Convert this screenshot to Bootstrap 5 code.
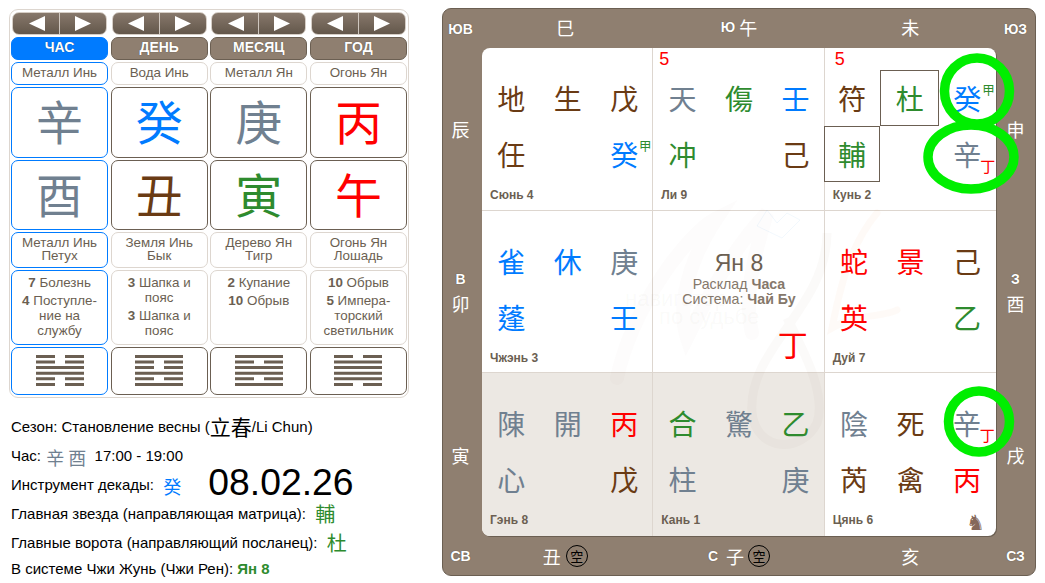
<!DOCTYPE html>
<html lang="ru">
<head>
<meta charset="utf-8">
<title>Ци Мэнь</title>
<link rel="stylesheet" href="https://cdn.jsdelivr.net/npm/bootstrap@5.3.0/dist/css/bootstrap.min.css">
<style>
:root{--brown:#8f7f70;--dk:#6b5f52;--ln:#ddd6cf;}
html,body{background:#fff;overflow:hidden}
body{width:1045px;height:583px;font-family:"Liberation Sans","Noto Sans CJK TC",sans-serif;font-size:14px;color:#000}
.han{font-family:"Noto Sans CJK TC","Noto Sans CJK SC",sans-serif}
.e-m{color:#708090}.e-w{color:#007bff}.e-f{color:#f00}.e-e{color:#6a3b14}.e-t{color:#2e8b2e}
.page{padding:9px 0 0 9px;gap:33px;align-items:flex-start}
.left-col{width:400px;flex:none}
.pan{height:389px;border:1px solid var(--ln);border-radius:9px;padding:2px 1px 1px 1px;display:grid;grid-template-columns:repeat(4,1fr);grid-template-rows:23px 23px 23px 71px 70px 36px 75px 48px;gap:2px 2.5px}
.navb{margin:0 1px;border:1px solid #d6cec6;border-radius:7px;overflow:hidden;background:linear-gradient(#87786b,#63574b)}
.navb .btn{padding:0;border:0;border-radius:0;flex:1 1 50%;height:100%;display:flex;align-items:center;justify-content:center;background:transparent}
.navb .btn+.btn{border-left:1px solid #cfc7bf}
.tabx{background:var(--brown);border:1px solid var(--dk);border-radius:7px;color:#fff;font-weight:700;font-size:14px;padding-bottom:3px;text-shadow:0 0 1px rgba(0,0,0,.5)}
.tabx.on{background:#007bff;border-color:#007bff}
.cellx{border:1px solid var(--ln);border-radius:7px;color:var(--dk);font-size:13.4px;line-height:13.4px;text-align:center;padding-bottom:2px}
.cellx.dk{border-color:var(--dk)}
.pan .on{border-color:#007bff}
.big{font-size:47px;line-height:1;padding-bottom:4px}
.phs{line-height:15px;padding-top:4px;padding-bottom:0}
.phs div+div{margin-top:3px}
.info{padding:15px 0 0 2px;font-size:15px}
.inf-l{height:29px}
.inf-last{height:22px}
.inf-l .hz{font-size:18px;line-height:1}
.inf-l .hzn{margin-left:1px}
.inf-l .hzl{font-size:20px;line-height:1;margin-left:1px;padding-bottom:2px}
.inf-l .sea{font-size:21px;line-height:1;padding-bottom:3px}
.dt{font-size:37.3px;line-height:1;margin-left:27px;padding-bottom:5px}
.board{width:594px;height:568px;margin-top:-1px;background:var(--brown);border:1px solid var(--dk);border-radius:9px;display:grid;grid-template-columns:39px repeat(3,1fr) 39px;grid-template-rows:39px repeat(3,1fr) 39px;color:#fff;position:relative}
.edge{font-size:18px;line-height:1}
.edge b{font-size:14px;font-family:"Liberation Sans",sans-serif;text-shadow:0 0 1px rgba(0,0,0,.5)}
.edge.top{padding-bottom:4px}
.edge.top b{margin-top:1px}
.edge.lft{padding-right:4px}
.kong{width:22px;height:22px;border:1px solid #000;border-radius:50%;color:#000;font-size:13px;line-height:20px;text-align:center;margin-left:5px}
.shl{padding-right:5px}
.inner{grid-column:2/5;grid-row:2/5;display:grid;grid-template-columns:repeat(3,1fr);grid-template-rows:repeat(3,1fr);background:#fff;border-radius:8px;overflow:hidden;color:var(--dk);box-shadow:1px 1px 0 #6b5f52;position:relative}
.pal{border-right:1px solid var(--ln);border-bottom:1px solid var(--ln);padding-left:1px;min-width:0}
.pal:nth-child(3n){border-right:0}.pal:nth-child(n+7){border-bottom:0}
.pal.gy{background:#ece8e3}
.ptop{height:22px;font-family:"Liberation Sans",sans-serif;font-size:18px;line-height:22px;color:#f00;padding-left:5px}
.ptop.k{padding-left:9px}
.gly{display:grid;grid-template-columns:repeat(3,56.5px);grid-template-rows:repeat(2,56px);font-size:28px}
.gly.kn-g{margin-left:-2px;grid-template-columns:56.5px 59px 56px}
.gly>span{display:flex;align-items:center;justify-content:center;position:relative;line-height:1}
.boxed{outline:1px solid var(--dk);outline-offset:-1px}
.sup,.sub{position:absolute;line-height:1}
.sup{left:43px;top:14px;font-size:12.5px}
.sub{left:41px;top:32px;font-size:15px}
.lbl{font-size:12px;font-weight:700;font-family:"Liberation Sans",sans-serif;padding:6px 7px 0;line-height:14px;color:var(--dk)}
.kn{font-family:"DejaVu Sans",sans-serif;font-size:21px;line-height:14px;font-weight:400;color:#85685a;margin:3px 4px 0 0}
.ctr{padding-top:39px;color:#85786b;font-family:"Liberation Sans","Noto Sans CJK TC",sans-serif}
.ctr .t1{font-size:23px;line-height:26px;color:var(--dk)}
.ctr .t2{font-size:14.2px;line-height:15.5px}
.ctr .t1+.t2{margin-top:1px}
.ctr .dng{font-family:"Noto Sans CJK TC",sans-serif;font-size:30px;line-height:1;margin:20px 16px 0 auto}
.wm,.rings{position:absolute;pointer-events:none}
.wm{left:0;top:0}
.wm text{font-size:22px;font-family:"Liberation Sans",sans-serif;fill:#8f7f70;fill-opacity:.05}
.rings{left:-1px;top:-1px}
</style>
</head>
<body>
<div class="page d-flex">
  <div class="left-col">
    <div class="pan">
      <div class="navb btn-group d-flex"><button class="btn" type="button"><svg width="16" height="15"><polygon points="16,0 16,15 0,7.5" fill="#fff"/></svg></button><button class="btn" type="button"><svg width="16" height="15"><polygon points="0,0 0,15 16,7.5" fill="#fff"/></svg></button></div>
      <div class="navb btn-group d-flex"><button class="btn" type="button"><svg width="16" height="15"><polygon points="16,0 16,15 0,7.5" fill="#fff"/></svg></button><button class="btn" type="button"><svg width="16" height="15"><polygon points="0,0 0,15 16,7.5" fill="#fff"/></svg></button></div>
      <div class="navb btn-group d-flex"><button class="btn" type="button"><svg width="16" height="15"><polygon points="16,0 16,15 0,7.5" fill="#fff"/></svg></button><button class="btn" type="button"><svg width="16" height="15"><polygon points="0,0 0,15 16,7.5" fill="#fff"/></svg></button></div>
      <div class="navb btn-group d-flex"><button class="btn" type="button"><svg width="16" height="15"><polygon points="16,0 16,15 0,7.5" fill="#fff"/></svg></button><button class="btn" type="button"><svg width="16" height="15"><polygon points="0,0 0,15 16,7.5" fill="#fff"/></svg></button></div>

      <div class="tabx on d-flex align-items-center justify-content-center">ЧАС</div>
      <div class="tabx d-flex align-items-center justify-content-center">ДЕНЬ</div>
      <div class="tabx d-flex align-items-center justify-content-center">МЕСЯЦ</div>
      <div class="tabx d-flex align-items-center justify-content-center">ГОД</div>

      <div class="cellx on d-flex align-items-center justify-content-center">Металл Инь</div>
      <div class="cellx d-flex align-items-center justify-content-center">Вода Инь</div>
      <div class="cellx d-flex align-items-center justify-content-center">Металл Ян</div>
      <div class="cellx d-flex align-items-center justify-content-center">Огонь Ян</div>

      <div class="cellx dk on d-flex align-items-center justify-content-center"><span class="big han e-m">辛</span></div>
      <div class="cellx dk d-flex align-items-center justify-content-center"><span class="big han e-w">癸</span></div>
      <div class="cellx dk d-flex align-items-center justify-content-center"><span class="big han e-m">庚</span></div>
      <div class="cellx dk d-flex align-items-center justify-content-center"><span class="big han e-f">丙</span></div>

      <div class="cellx dk on d-flex align-items-center justify-content-center"><span class="big han e-m">酉</span></div>
      <div class="cellx dk d-flex align-items-center justify-content-center"><span class="big han e-e">丑</span></div>
      <div class="cellx dk d-flex align-items-center justify-content-center"><span class="big han e-t">寅</span></div>
      <div class="cellx dk d-flex align-items-center justify-content-center"><span class="big han e-f">午</span></div>

      <div class="cellx on d-flex align-items-center justify-content-center">Металл Инь<br>Петух</div>
      <div class="cellx d-flex align-items-center justify-content-center">Земля Инь<br>Бык</div>
      <div class="cellx d-flex align-items-center justify-content-center">Дерево Ян<br>Тигр</div>
      <div class="cellx d-flex align-items-center justify-content-center">Огонь Ян<br>Лошадь</div>

      <div class="cellx on phs"><div><b>7</b> Болезнь</div><div><b>4</b> Поступле-<br>ние на<br>службу</div></div>
      <div class="cellx phs"><div><b>3</b> Шапка и<br>пояс</div><div><b>3</b> Шапка и<br>пояс</div></div>
      <div class="cellx phs"><div><b>2</b> Купание</div><div><b>10</b> Обрыв</div></div>
      <div class="cellx phs"><div><b>10</b> Обрыв</div><div><b>5</b> Импера-<br>торский<br>светильник</div></div>

      <div class="cellx dk on d-flex align-items-center justify-content-center"><svg width="48" height="31" stroke="#6b5f52" stroke-width="3" fill="none"><path d="M0 1.5H19M29 1.5H48M0 7H19M29 7H48M0 12.6H48M0 18.2H48M0 23.8H19M29 23.8H48M0 29.4H19M29 29.4H48"/></svg></div>
      <div class="cellx dk d-flex align-items-center justify-content-center"><svg width="48" height="31" stroke="#6b5f52" stroke-width="3" fill="none"><path d="M0 1.5H48M0 7H19M29 7H48M0 12.6H19M29 12.6H48M0 18.2H48M0 23.8H19M29 23.8H48M0 29.4H48"/></svg></div>
      <div class="cellx dk d-flex align-items-center justify-content-center"><svg width="48" height="31" stroke="#6b5f52" stroke-width="3" fill="none"><path d="M0 1.5H48M0 7H19M29 7H48M0 12.6H48M0 18.2H48M0 23.8H19M29 23.8H48M0 29.4H48"/></svg></div>
      <div class="cellx dk d-flex align-items-center justify-content-center"><svg width="48" height="31" stroke="#6b5f52" stroke-width="3" fill="none"><path d="M0 1.5H19M29 1.5H48M0 7H48M0 12.6H48M0 18.2H48M0 23.8H48M0 29.4H19M29 29.4H48"/></svg></div>
    </div>
    <div class="info">
      <div class="inf-l d-flex align-items-center">Сезон: Становление весны (<span class="sea han">立春</span>/Li Chun)</div>
      <div class="inf-l d-flex align-items-center">Час:&nbsp;<span class="hz hzn han e-m">辛 酉</span>&nbsp;&nbsp;17:00 - 19:00</div>
      <div class="inf-l d-flex align-items-center">Инструмент декады:&nbsp;&nbsp;<span class="hz hzn han e-w">癸</span><span class="dt">08.02.26</span></div>
      <div class="inf-l d-flex align-items-center">Главная звезда (направляющая матрица):&nbsp;&nbsp;<span class="hzl han e-t">輔</span></div>
      <div class="inf-l d-flex align-items-center">Главные ворота (направляющий посланец):&nbsp;&nbsp;<span class="hzl han e-t">杜</span></div>
      <div class="inf-l inf-last d-flex align-items-center">В системе Чжи Жунь (Чжи Рен):&nbsp;<b class="e-t">Ян 8</b></div>
    </div>
  </div>

  <div class="board">
    <div class="edge d-flex align-items-center justify-content-center pe-1"><b>ЮВ</b></div>
    <div class="edge top shl d-flex align-items-center justify-content-center han">巳</div>
    <div class="edge top d-flex align-items-center justify-content-center han"><b class="me-1">Ю</b>午</div>
    <div class="edge top d-flex align-items-center justify-content-center han">未</div>
    <div class="edge d-flex align-items-center justify-content-center"><b>ЮЗ</b></div>

    <div class="edge lft d-flex align-items-center justify-content-center han" style="grid-column:1;grid-row:2">辰</div>
    <div class="edge lft d-flex flex-column gap-2 align-items-center justify-content-center han" style="grid-column:1;grid-row:3"><b>В</b>卯</div>
    <div class="edge lft d-flex align-items-center justify-content-center han" style="grid-column:1;grid-row:4">寅</div>
    <div class="edge d-flex align-items-center justify-content-center han" style="grid-column:5;grid-row:2">申</div>
    <div class="edge d-flex flex-column gap-2 align-items-center justify-content-center han" style="grid-column:5;grid-row:3"><b>З</b>酉</div>
    <div class="edge d-flex align-items-center justify-content-center han" style="grid-column:5;grid-row:4">戌</div>

    <div class="inner han">
      <div class="pal"><div class="ptop"></div><div class="gly">
        <span class="e-e">地</span><span class="e-e">生</span><span class="e-e">戊</span>
        <span class="e-e">任</span><span></span><span class="e-w">癸<i class="sup e-t fst-normal">甲</i></span>
      </div><div class="lbl">Сюнь 4</div></div>

      <div class="pal"><div class="ptop">5</div><div class="gly">
        <span class="e-m">天</span><span class="e-t">傷</span><span class="e-w">壬</span>
        <span class="e-t">冲</span><span></span><span class="e-e">己</span>
      </div><div class="lbl">Ли 9</div></div>

      <div class="pal"><div class="ptop k">5</div><div class="gly kn-g">
        <span class="e-e">符</span><span class="e-t boxed">杜</span><span class="e-w">癸<i class="sup e-t fst-normal">甲</i></span>
        <span class="e-t boxed">輔</span><span></span><span class="e-m">辛<i class="sub e-f fst-normal">丁</i></span>
      </div><div class="lbl">Кунь 2</div></div>

      <div class="pal"><div class="ptop"></div><div class="gly">
        <span class="e-w">雀</span><span class="e-w">休</span><span class="e-m">庚</span>
        <span class="e-w">蓬</span><span></span><span class="e-w">壬</span>
      </div><div class="lbl">Чжэнь 3</div></div>

      <div class="pal ctr d-flex flex-column align-items-center text-center">
        <div class="t1">Ян 8</div>
        <div class="t2">Расклад <b>Часа</b></div>
        <div class="t2">Система: <b>Чай Бу</b></div>
        <div class="dng e-f">丁</div>
      </div>

      <div class="pal"><div class="ptop"></div><div class="gly">
        <span class="e-f">蛇</span><span class="e-f">景</span><span class="e-e">己</span>
        <span class="e-f">英</span><span></span><span class="e-t">乙</span>
      </div><div class="lbl">Дуй 7</div></div>

      <div class="pal gy"><div class="ptop"></div><div class="gly">
        <span class="e-m">陳</span><span class="e-m">開</span><span class="e-f">丙</span>
        <span class="e-m">心</span><span></span><span class="e-e">戊</span>
      </div><div class="lbl">Гэнь 8</div></div>

      <div class="pal gy"><div class="ptop"></div><div class="gly">
        <span class="e-t">合</span><span class="e-m">驚</span><span class="e-t">乙</span>
        <span class="e-m">柱</span><span></span><span class="e-m">庚</span>
      </div><div class="lbl">Кань 1</div></div>

      <div class="pal"><div class="ptop"></div><div class="gly">
        <span class="e-m">陰</span><span class="e-e">死</span><span class="e-m">辛<i class="sub e-f fst-normal">丁</i></span>
        <span class="e-e">芮</span><span class="e-e">禽</span><span class="e-f">丙</span>
      </div><div class="lbl d-flex justify-content-between">Цянь 6<span class="kn">♞</span></div></div>

      <svg class="wm" width="514" height="488" viewBox="0 0 514 488" fill="none">
        <path d="M135 330C150 260 205 185 235 170C205 215 195 260 205 290C230 240 255 195 285 165C270 215 262 250 270 285" stroke="#8f7f70" stroke-opacity=".02" stroke-width="14" stroke-linecap="round"/>
        <path d="M345 185C345 260 265 300 270 365C275 405 320 405 335 375C345 345 320 300 305 270" stroke="#8f7f70" stroke-opacity=".04" stroke-width="9"/>
        <path d="M395 165C370 195 360 230 350 280C375 265 400 270 415 262" stroke="#f2a15a" stroke-opacity=".05" stroke-width="7" stroke-linecap="round"/>
        <path d="M275 178L300 190L318 172L305 165L295 175L285 162Z" stroke="#5aa8e0" stroke-opacity=".08"/>
        <text x="143" y="258">навигатор</text>
        <text x="177" y="276">по судьбе</text>
      </svg>
    </div>

    <div class="edge d-flex align-items-center justify-content-center pe-1" style="grid-column:1;grid-row:5"><b>СВ</b></div>
    <div class="edge shl d-flex align-items-center justify-content-center han" style="grid-column:2;grid-row:5">丑<span class="kong">空</span></div>
    <div class="edge d-flex align-items-center justify-content-center han" style="grid-column:3;grid-row:5"><b class="me-2">С</b>子<span class="kong ms-1">空</span></div>
    <div class="edge d-flex align-items-center justify-content-center han" style="grid-column:4;grid-row:5">亥</div>
    <div class="edge d-flex align-items-center justify-content-center" style="grid-column:5;grid-row:5"><b>СЗ</b></div>

    <svg class="rings" width="594" height="568" viewBox="0 0 594 568" fill="none" stroke="#00ee00" stroke-width="9.5">
      <ellipse cx="535" cy="83" rx="32.5" ry="33"/>
      <ellipse cx="529" cy="149" rx="43" ry="32"/>
      <ellipse cx="537" cy="413.5" rx="30.5" ry="30.5"/>
    </svg>
  </div>
</div>
<script src="https://cdn.jsdelivr.net/npm/bootstrap@5.3.0/dist/js/bootstrap.bundle.min.js"></script>
</body>
</html>
